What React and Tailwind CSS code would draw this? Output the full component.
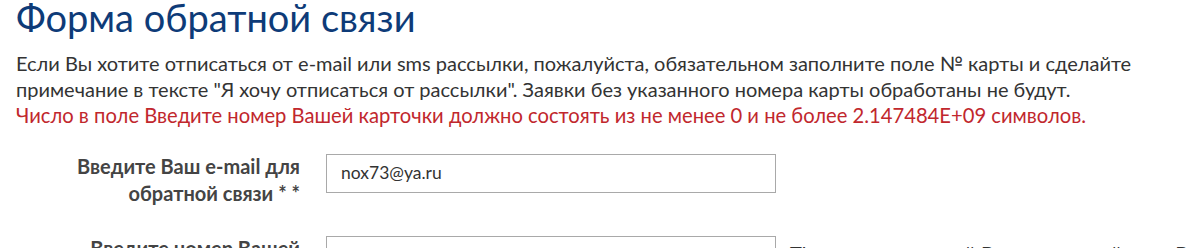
export default function App() {
  return (
    <div className="w-[1200px] h-[248px] overflow-hidden bg-white" style={{ fontFamily: 'Lato, "Open Sans", sans-serif' }}>
      <div className="pl-[16px] -mt-[8px]">
        <h1 className="text-[38px] leading-[50px] text-[#0e3b78] font-normal">Форма обратной связи</h1>
        <div className="mt-[8px] leading-[26px] text-[#333333]">
          <p className="text-[20px]">
            Если Вы хотите отписаться от e-mail или sms рассылки, пожалуйста, обязательном заполните поле № карты и сделайте<br />
            примечание в тексте "Я хочу отписаться от рассылки". Заявки без указанного номера карты обработаны не будут.
          </p>
          <p className="text-[20.2px] text-[#c1272d]">
            Число в поле Введите номер Вашей карточки должно состоять из не менее 0 и не более 2.147484E+09 символов.
          </p>
        </div>
        <div className="mt-[26px] flex flex-col gap-[29px]">
          <div className="flex items-start">
            <label className="w-[284px] shrink-0 text-right font-bold text-[20px] leading-[27px] text-[#444444] -mt-[1px]">
              Введите Ваш e-mail для<br />обратной связи * *
            </label>
            <div className="ml-[26px] w-[450px] shrink-0 h-[39px] border border-[#a9a9a9] flex items-center px-[14px] text-[17.5px] text-[#333333]">
              nox73@ya.ru
            </div>
          </div>
          <div className="flex items-start">
            <label className="w-[284px] shrink-0 text-right font-bold text-[20px] leading-[27px] text-[#444444] -mt-[1px]">
              Введите номер Вашей<br />карточки
            </label>
            <div className="ml-[26px] w-[450px] shrink-0 h-[39px] border border-[#a9a9a9]"></div>
            <div className="ml-[14px] text-[20px] leading-[26px] text-[#333333] pt-[4px] whitespace-nowrap">
              Тhe номер, который Вы можете найти на Вашей
            </div>
          </div>
        </div>
      </div>
    </div>
  );
}
